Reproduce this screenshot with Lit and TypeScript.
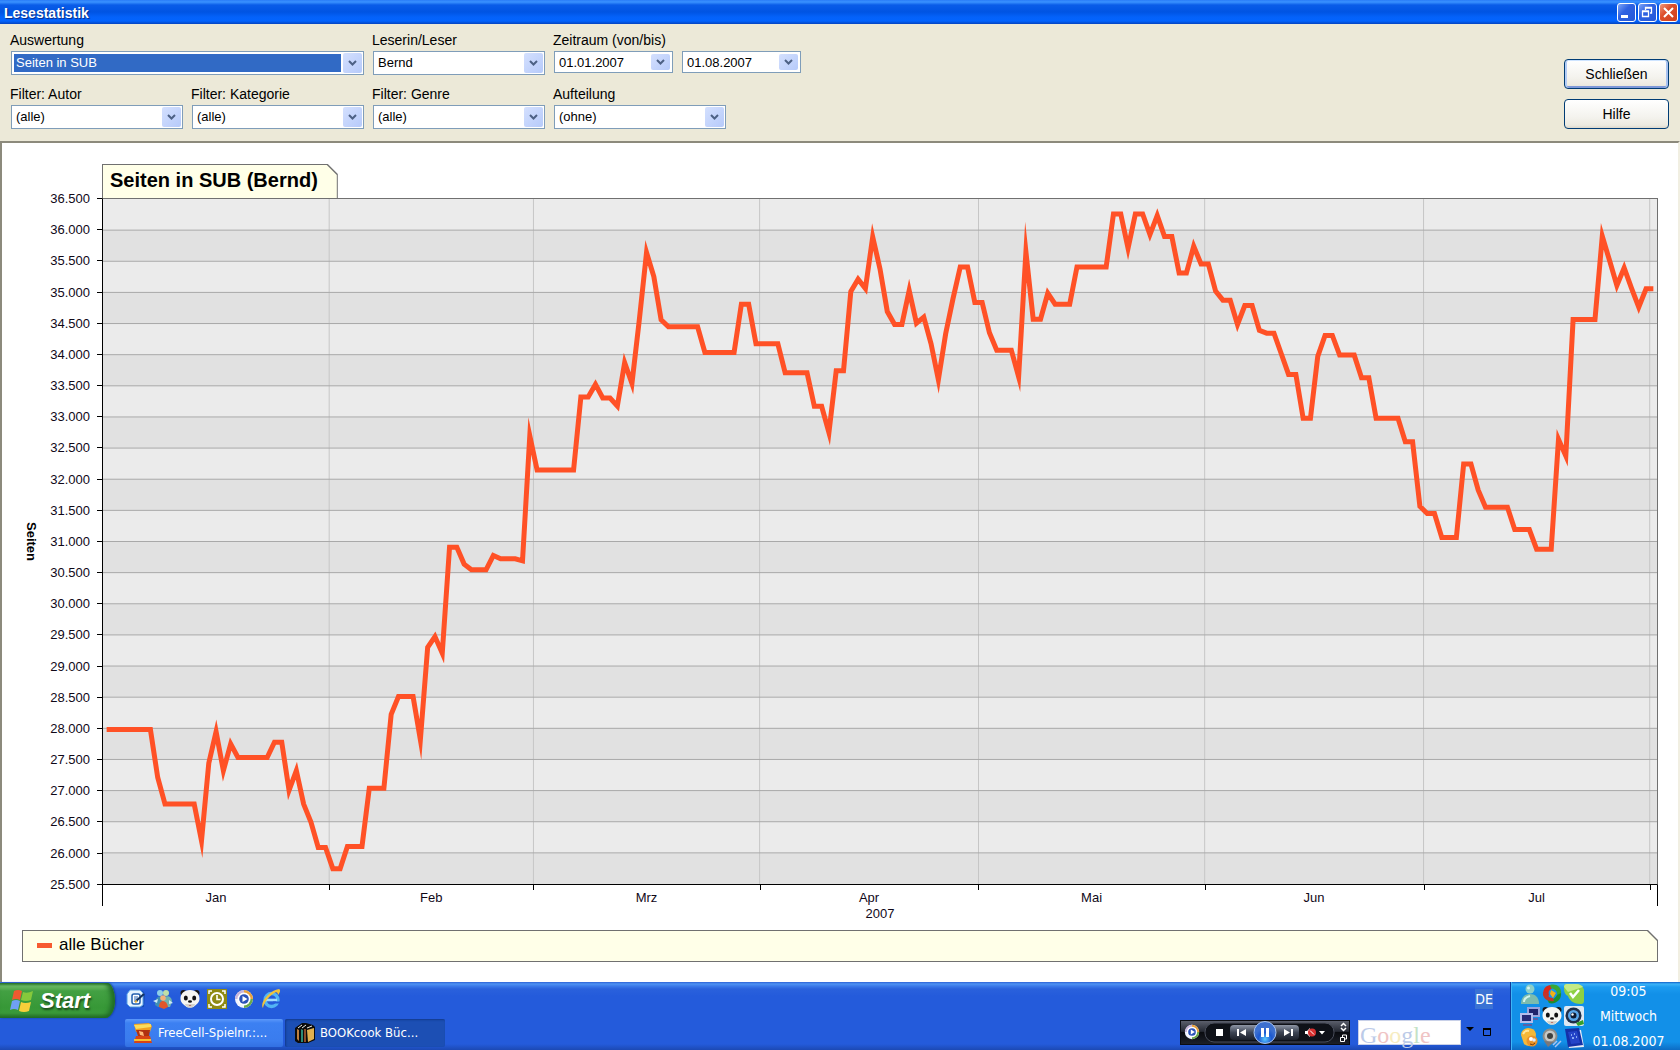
import { LitElement, html, css, svg } from "lit";
import { customElement, state } from "lit/decorators.js";

/* ------------------------------------------------------------------ data */

const DAYS = 213;
const MAX_PAGES = 36500;
const MIN_PAGES = 25500;
const STEP = 500;

const MONTHS = [
  { name: "Jan", days: 31 },
  { name: "Feb", days: 28 },
  { name: "Mrz", days: 31 },
  { name: "Apr", days: 30 },
  { name: "Mai", days: 31 },
  { name: "Jun", days: 30 },
  { name: "Jul", days: 31 },
  { name: "", days: 1 },
];

/** [day of the period, unread pages]; the values between two entries lie on a line. */
const SERIES: [number, number][] = [
  [0, 27980], [6, 27980], [7, 27210], [8, 26783], [12, 26783], [13, 26195], [14, 27440],
  [15, 27945], [16, 27320], [17, 27750], [18, 27531], [22, 27531], [23, 27777], [24, 27777],
  [25, 27004], [26, 27321], [27, 26783], [28, 26494], [29, 26088], [30, 26088], [31, 25746],
  [32, 25746], [33, 26104], [35, 26104], [36, 27039], [38, 27039], [39, 28226], [40, 28509],
  [42, 28509], [43, 27817], [44, 29300], [45, 29473], [46, 29206], [47, 30909], [48, 30909],
  [49, 30637], [50, 30546], [52, 30546], [53, 30775], [54, 30722], [56, 30722], [57, 30690],
  [58, 32696], [59, 32148], [64, 32148], [65, 33320], [66, 33320], [67, 33523], [68, 33304],
  [69, 33304], [70, 33175], [71, 33870], [72, 33539], [73, 34550], [74, 35640], [75, 35255],
  [76, 34560], [77, 34447], [81, 34447], [82, 34036], [86, 34036], [87, 34811], [88, 34811],
  [89, 34175], [92, 34175], [93, 33710], [96, 33710], [97, 33170], [98, 33170], [99, 32748],
  [100, 33742], [101, 33742], [102, 35014], [103, 35212], [104, 35062], [105, 35891],
  [106, 35378], [107, 34693], [108, 34485], [109, 34485], [110, 35030], [111, 34506],
  [112, 34603], [113, 34175], [114, 33598], [115, 34335], [116, 34896], [117, 35410],
  [118, 35410], [119, 34838], [120, 34838], [121, 34351], [122, 34073], [124, 34073],
  [125, 33646], [126, 35650], [127, 34570], [128, 34570], [129, 34987], [130, 34811],
  [132, 34811], [133, 35410], [137, 35410], [138, 36260], [139, 36260], [140, 35709],
  [141, 36260], [142, 36260], [143, 35928], [144, 36233], [145, 35896], [146, 35896],
  [147, 35313], [148, 35313], [149, 35741], [150, 35458], [151, 35458], [152, 35020],
  [153, 34875], [154, 34875], [155, 34485], [156, 34790], [157, 34790], [158, 34389],
  [159, 34346], [160, 34346], [161, 34015], [162, 33683], [163, 33683], [164, 32978],
  [165, 32978], [166, 33972], [167, 34309], [168, 34309], [169, 33993], [171, 33993],
  [172, 33630], [173, 33630], [174, 32978], [177, 32978], [178, 32603], [179, 32603],
  [180, 31566], [181, 31449], [182, 31449], [183, 31064], [185, 31064], [186, 32245],
  [187, 32245], [188, 31823], [189, 31550], [192, 31550], [193, 31192], [195, 31192],
  [196, 30877], [198, 30877], [199, 32641], [200, 32374], [201, 34565], [204, 34565],
  [205, 35901], [206, 35511], [207, 35110], [208, 35394], [209, 35068], [210, 34763],
  [211, 35057], [212, 35057],
];

const germanNumber = (n: number) => `${Math.floor(n / 1000)}.${String(n % 1000).padStart(3, "0")}`;

/* ----------------------------------------------------------------- chart */

@customElement("page-chart")
export class PageChart extends LitElement {
  static styles = css`
    :host {
      display: flex;
      flex-direction: column;
      min-height: 0;
      box-sizing: border-box;
      padding: 21px 20px 20px;
      background: #fff;
      color: #000;
      font: 13px/16px "Liberation Sans", Arial, sans-serif;
    }
    .chart {
      flex: 1;
      min-height: 0;
      display: grid;
      grid-template-columns: 80px minmax(0, 1fr);
      grid-template-rows: auto minmax(0, 1fr) auto auto;
    }
    .head { grid-column: 2; display: flex; }
    .note {
      background: #707070;
      padding: 1px;
      clip-path: polygon(0 0, calc(100% - 10px) 0, 100% 10px, 100% 100%, 0 100%);
    }
    .note-in {
      background: #ffffe8;
      clip-path: polygon(0 0, calc(100% - 10px) 0, 100% 10px, 100% 100%, 0 100%);
    }
    .tab { padding-bottom: 0; }
    .tab .note-in {
      margin: 0;
      padding: 0 19px 3px 7px;
      font-size: 20px;
      line-height: 30px;
      font-weight: bold;
    }
    .yaxis { grid-column: 1; display: flex; min-height: 0; }
    .ytitle {
      writing-mode: vertical-rl;
      align-self: center;
      width: 17px;
      font-weight: bold;
    }
    .ylabels {
      flex: 1;
      display: flex;
      flex-direction: column;
      justify-content: space-between;
      margin: -8px 0;
    }
    .ylabel {
      display: flex;
      justify-content: flex-end;
      align-items: center;
      gap: 7px;
      height: 17px;
      line-height: 17px;
      color: #100818;
    }
    .ylabel::after { content: ""; width: 5px; height: 1px; background: #000; }
    .plot {
      grid-column: 2;
      min-height: 0;
      border: 1px solid #707070;
      border-left-color: #000;
      border-bottom-color: #000;
    }
    .plot svg { display: block; width: 100%; height: 100%; overflow: visible; }
    .light { fill: #ebebeb; }
    .dark { fill: #e1e1e1; }
    .hline, .vline { vector-effect: non-scaling-stroke; stroke-width: 1px; shape-rendering: crispEdges; }
    .hline { stroke: #a9a9a9; }
    .vline { stroke: #c6c6c6; }
    .series {
      fill: none;
      stroke: #ff5126;
      stroke-width: 5px;
      stroke-linejoin: miter;
      stroke-miterlimit: 20;
      vector-effect: non-scaling-stroke;
    }
    .xaxis {
      grid-column: 2;
      display: grid;
      border: solid #000;
      border-width: 0 1px;
      color: #100818;
    }
    .month { min-width: 0; text-align: center; line-height: 16px; }
    .month::before { content: ""; display: block; width: 1px; height: 5px; background: #000; }
    .month:first-child::before { background: none; }
    .year { grid-column: 2; text-align: center; color: #100818; }
    .legend { margin-top: 8px; }
    .legend .note-in {
      display: flex;
      align-items: center;
      gap: 7px;
      padding: 3px 14px 5px;
      font-size: 17px;
      line-height: 22px;
    }
    .swatch { width: 15px; height: 5px; background: #f75a30; }
  `;

  private renderPlot() {
    const rows = (MAX_PAGES - MIN_PAGES) / STEP;
    const bounds: number[] = [];
    MONTHS.reduce((sum, m) => {
      bounds.push(sum + m.days);
      return sum + m.days;
    }, 0);
    const points = SERIES.map(([day, v]) => `${day + 0.5},${((MAX_PAGES - v) / STEP).toFixed(3)}`).join(" ");
    return html`<svg viewBox="0 0 ${DAYS} ${rows}" preserveAspectRatio="none" role="img" aria-label="Seiten in SUB">
      ${Array.from({ length: rows }, (_, i) => svg`<rect class=${i % 2 ? "dark" : "light"} x="0" y=${i} width=${DAYS} height="1" shape-rendering="crispEdges"></rect>`)}
      ${bounds.slice(0, -1).map((x) => svg`<line class="vline" x1=${x} x2=${x} y1="0" y2=${rows}></line>`)}
      ${Array.from({ length: rows - 1 }, (_, i) => svg`<line class="hline" x1="0" x2=${DAYS} y1=${i + 1} y2=${i + 1}></line>`)}
      <polyline class="series" points=${points}></polyline>
    </svg>`;
  }

  render() {
    const ticks: number[] = [];
    for (let v = MAX_PAGES; v >= MIN_PAGES; v -= STEP) ticks.push(v);
    return html`
      <div class="chart">
        <div class="head"><div class="note tab"><h1 class="note-in">Seiten in SUB (Bernd)</h1></div></div>
        <div class="yaxis">
          <div class="ytitle">Seiten</div>
          <div class="ylabels">${ticks.map((t) => html`<div class="ylabel">${germanNumber(t)}</div>`)}</div>
        </div>
        <div class="plot">${this.renderPlot()}</div>
        <div class="xaxis" style="grid-template-columns:${MONTHS.map((m) => `${m.days}fr`).join(" ")}">
          ${MONTHS.map((m) => html`<div class="month">${m.name}</div>`)}
        </div>
        <div class="year">2007</div>
      </div>
      <div class="note legend"><div class="note-in"><span class="swatch"></span>alle Bücher</div></div>
    `;
  }
}

/* --------------------------------------------------------------- taskbar */

const panda = svg`<circle cx="3.500" cy="4" r="3" fill="#181818"/><circle cx="16.500" cy="4" r="3" fill="#181818"/>
  <path d="M10 1c6 0 9.500 4 9.500 8.500 0 4-3 6-5 7.500-1 2-8 2-9 0-2-1.500-5-3.500-5-7.500C.5 5 4 1 10 1z" fill="#f6f6f2"/><path d="M5 15c1 5 9 5 10 0z" fill="#d4d4cc"/>
  <ellipse cx="5.800" cy="9" rx="2" ry="2.500" fill="#111"/><ellipse cx="14.200" cy="9" rx="2" ry="2.500" fill="#111"/>
  <ellipse cx="10" cy="12.500" rx="2" ry="1.300" fill="#111"/><path d="M8.500 16q1.500 1.500 3 0z" fill="#b03030"/>`;

const icons = {
  desktop: svg`<path d="M3 2h14l2 3-1 13-14 1-2-4z" fill="#0d3f9c" opacity=".6"/><path d="M4 1h10l3 3v12l-3 2H4l-3-3V5z" fill="#e6f4ff" stroke="#58a0e8"/>
    <rect x="6" y="5" width="8" height="10" rx="2" fill="#fff" stroke="#225fae" stroke-width="1.500"/><path d="M8 8h4M8 10h5M8 12h4" stroke="#2a68b8"/><path d="M10 12l8-7" stroke="#14325f" stroke-width="2"/><path d="M9 13l2-1" stroke="#e6b23a" stroke-width="2"/>`,
  messenger: svg`<circle cx="7" cy="4" r="3" fill="#8fd0e8"/><circle cx="13" cy="4" r="3" fill="#bfe0a8"/><path d="M2 16c0-11 9-11 9-3v5H5z" fill="#3f8fb5"/>
    <path d="M9 15c0-10 10-10 10-2l-2 5H9z" fill="#6fb4b0"/><circle cx="10" cy="9" r="2.800" fill="#f2b27a"/><path d="M6 18c0-8 8-8 9 0l-4 2z" fill="#e0562c"/><path d="M0 12l5-2-1 4zM20 14l-4-3v4z" fill="#cfe8f4"/>`,
  panda,
  clock: svg`<rect x="0" y="0" width="20" height="20" fill="#8f8a12"/><path d="M2 5V2h3M15 2h3v3M18 15v3h-3M5 18H2v-3" fill="none" stroke="#fff" stroke-width="1.500"/>
    <circle cx="10" cy="10" r="6" fill="none" stroke="#fff" stroke-width="2"/><path d="M10 6v4.500h3.500" fill="none" stroke="#fff" stroke-width="1.600"/>`,
  media: svg`<circle cx="10" cy="10" r="9" fill="#f0f4fe"/><path d="M10 1a9 9 0 0 1 9 9h-3a6 6 0 0 0-6-6z" fill="#e9a13c"/>
    <path d="M19 10a9 9 0 0 1-9 9v-3a6 6 0 0 0 6-6z" fill="#6aa84a"/><path d="M1 10a9 9 0 0 1 9-9v3a6 6 0 0 0-6 6z" fill="#c9b6da"/>
    <circle cx="10" cy="10" r="6.500" fill="#fff"/><circle cx="10" cy="10" r="4.800" fill="#2b52b8"/><path d="M8.500 7l5 3-5 3z" fill="#fff"/>`,
  explorer: svg`<circle cx="10.500" cy="11" r="6.500" fill="none" stroke="#52b4f4" stroke-width="3.400"/><path d="M5 11h11" stroke="#9fdcff" stroke-width="2.600"/><path d="M12 14.500h8v-2h-8z" fill="#245bdb"/>
    <path d="M2 19C-2 14 9 1 18 0c2 1 1 4-1 6 0-3-2-4-5-1C7 8 3 14 2 19z" fill="#f0c23c"/>`,
  person: svg`<circle cx="10" cy="5" r="4.500" fill="#8ccfc8"/><path d="M1 20c0-7 4-10 9-10s9 3 9 10z" fill="#7cbcae"/><path d="M4 18c0-3 2-5 6-6" stroke="#d4f4ec" stroke-width="2" fill="none"/><circle cx="8.500" cy="4" r="1.500" fill="#d8f4f0"/>`,
  swirl: svg`<path d="M4 15A8 8 0 0 1 8 1l5 1-4 3a5 5 0 0 0-2 6z" fill="#d82a1c"/><path d="M8 1c7-2 12 3 11 9l-4 2c1-4-1-7-6-8z" fill="#38a838"/><path d="M19 9c1 7-6 12-12 10l-2-4c4 2 8 0 10-4z" fill="#1f8f2b"/>
    <path d="M1 8c-1 7 6 10 11 9l-1-3c-3 0-5-1-6-5z" fill="#c3352b"/><path d="M9 6l5 3-3 5-3-4z" fill="#f0b018"/>`,
  check: svg`<path d="M0 3q0-3 3-3h9c6 0 9 5 8 9v8q0 3-3 3C8 20 5 15 4 12 0 10 0 6 0 3z" fill="#8ed044"/><path d="M0 3q0-3 3-3h9c4 0 6 2 7 3L4 8z" fill="#c4ea86"/><path d="M6 9l3 4 6-7" fill="none" stroke="#fff" stroke-width="2.500"/>`,
  network: svg`<rect x="7" y="1" width="13" height="10" fill="#9aa4dc"/><rect x="9" y="3" width="9" height="6" fill="#20246c"/><rect x="0" y="7" width="13" height="10" fill="#b4bcec"/><rect x="2" y="9" width="9" height="6" fill="#262a78"/><path d="M3 19h9M13 13h5" stroke="#5a60a8" stroke-width="2"/>`,
  webcam: svg`<rect x="0" y="0" width="20" height="20" rx="2" fill="#dfe8f2"/><circle cx="9.500" cy="9.500" r="8" fill="#1f2e48"/><circle cx="9.500" cy="9.500" r="5.500" fill="#5aa6e8"/><circle cx="9.500" cy="9.500" r="3" fill="#0e1a30"/><circle cx="8.500" cy="8.500" r="1.200" fill="#fff"/><path d="M12 17l7-3 1 4-6 2z" fill="#35a02c"/>`,
  smiley: svg`<path d="M1 7q0-6 7-7 7 0 8 6l-1 10q-6 4-11 0z" fill="#f4b838"/><path d="M3 6q2-4 6-3" stroke="#ffe69a" stroke-width="2" fill="none"/><circle cx="12" cy="13" r="5.500" fill="#e8932a"/><circle cx="11" cy="11" r="2" fill="#fff"/><circle cx="14" cy="12" r="1.800" fill="#dfe8f8"/><path d="M10 16q3 2 5-1" stroke="#7a3d08" fill="none"/>`,
  speaker: svg`<circle cx="8" cy="8" r="7.500" fill="#8c8c88"/><circle cx="8" cy="8" r="5.500" fill="#c8c8c4"/><circle cx="8" cy="8" r="3" fill="#40403e"/><path d="M2 13l4 6 6-5z" fill="#77777a"/><path d="M13 19l6-6M11 17l4-4" stroke="#a8c4f0" stroke-width="1.500"/>`,
  book: svg`<path d="M3 1l14 1 3 17-15 1z" fill="#e8ecf8"/><path d="M1 1l14-1 4 17-15 2z" fill="#1430a8"/><path d="M4 4l9-1 3 12-9 1z" fill="#2444c8"/><path d="M7 7h1M10 6h1M8 10h2M12 9h1" stroke="#a8c8ff" stroke-width="1.500"/>`,
  freecell: svg`<path d="M1 1l15-1 3 3-2 6H3z" fill="#f0a020"/><path d="M1 2l17-1v3L3 6z" fill="#fadc5c"/><path d="M3 7h14l-1 6H5z" fill="#b03010"/><path d="M6 8l4 1 1 4-4-1z" fill="#ffb878"/><path d="M3 13h14l2 7H1z" fill="#d84414"/><path d="M1 17h17" stroke="#f8c030" stroke-width="2"/>`,
  books: svg`<path d="M0 5l7-5h4l7 2 2 2v13l-7 3H3l-3-2z" fill="#0c0c0c"/><path d="M2 6l2 1v11l-2-2z" fill="#c08040"/><path d="M6 6l2 1v12H6z" fill="#2a8a78"/><path d="M9 6h2v13H9z" fill="#8a4c28"/><path d="M12 7l7-2v11l-6 3z" fill="#e0b050"/><path d="M3 5l4-3M7 5l4-3M12 5l5-2" stroke="#f0f0e8"/>`,
};

@customElement("task-bar")
export class TaskBar extends LitElement {
  static styles = css`
    :host {
      display: flex;
      height: 68px;
      flex: none;
      color: #fff;
      font: 14px/18px "DejaVu Sans Condensed", "DejaVu Sans", Tahoma, sans-serif;
      background: linear-gradient(#2c62d6 0, #4e92f2 2px, #3c7bea 4px, #2a61dc 7px, #245bdb 14px, #245bdb 62px, #1c49b4 68px);
    }
    button { font: inherit; color: inherit; border: 0; padding: 0; cursor: pointer; }
    .start {
      align-self: flex-start;
      display: flex;
      align-items: center;
      gap: 7px;
      width: 115px;
      height: 35px;
      margin-top: 1px;
      padding-left: 9px;
      box-sizing: border-box;
      border-radius: 0 8px 10px 0 / 0 18px 18px 0;
      background: linear-gradient(#2e7a2e, #6dbd67 3px, #43a043 8px, #379837 24px, #3a9a3a 30px, #246c24);
      box-shadow: inset -4px 0 5px #1f6b25, 1px 0 2px #143c9a;
      font: italic bold 22px/30px "Liberation Sans", Arial, sans-serif;
      text-shadow: 1px 2px 2px #1c4a1c;
    }
    .middle {
      flex: 1;
      min-width: 0;
      display: flex;
      flex-direction: column;
      gap: 6px;
      padding: 5px 17px 3px 10px;
    }
    .row { display: flex; align-items: center; justify-content: space-between; }
    .quick { display: flex; gap: 7px; height: 24px; align-items: center; padding-left: 1px; }
    .quick button, .tray button { background: none; display: block; }
    .icon { display: block; width: 20px; height: 20px; }
    .lang { background: #3a72d4; line-height: 20px; }
    .tasks { display: flex; gap: 2px; margin-top: 2px; }
    .task {
      display: flex;
      align-items: center;
      gap: 5px;
      width: 158px;
      height: 28px;
      padding: 0 8px;
      border-radius: 2px;
      background: linear-gradient(#5c98fa, #3c80f2 4px, #3a7cee 22px, #3270e2);
      font-size: 13px;
      white-space: nowrap;
    }
    .active {
      width: 160px;
      padding: 0 10px;
      background: #1c4fb4;
      box-shadow: inset 1px 1px 2px #123a8c;
    }
    .tools { display: flex; align-items: center; gap: 4px; }
    .player { display: block; width: 170px; height: 25px; margin-right: 4px; }
    .search {
      display: block;
      width: 103px;
      height: 25px;
      box-sizing: border-box;
      border: 1px solid #c8d0e8;
      padding: 0 2px;
      background: #fff;
      color: #000;
    }
    .searchbox { display: grid; height: 25px; align-items: start; }
    .searchbox > * { grid-area: 1 / 1; }
    .brand {
      pointer-events: none;
      padding-left: 2px;
      font: 24px/30px "Liberation Serif", serif;
    }
    .b { color: #bccbe8; }
    .r { color: #efc4c4; }
    .y { color: #f6ecc0; }
    .g { color: #c4e2c6; }
    .toggles { width: 28px; height: 18px; display: block; }
    .tray {
      display: flex;
      align-items: center;
      gap: 8px;
      width: 170px;
      box-sizing: border-box;
      padding: 0 8px 0 9px;
      border-left: 1px solid #0e3c9e;
      background: linear-gradient(#0f5fc8 0, #3cb4f8 2px, #1c9cf0 5px, #1290e8 12px, #1290e8 60px, #0d6cc4);
      box-shadow: inset 1px 0 0 #3fb6f6;
    }
    .tray-icons { display: grid; grid-template-columns: repeat(3, 20px); gap: 2px; }
    .clock {
      flex: 1;
      display: flex;
      flex-direction: column;
      text-align: center;
      line-height: 25px;
      padding-right: 7px;
    }
  `;

  private icon(shape: unknown) {
    return html`<svg class="icon" viewBox="0 0 20 20" aria-hidden="true">${shape}</svg>`;
  }

  render() {
    const quick: [string, unknown][] = [
      ["Desktop anzeigen", icons.desktop],
      ["Messenger", icons.messenger],
      ["Panda", icons.panda],
      ["Uhr", icons.clock],
      ["Media Player", icons.media],
      ["Internet Explorer", icons.explorer],
    ];
    const tray: [string, unknown][] = [
      ["Benutzer", icons.person],
      ["Synchronisierung", icons.swirl],
      ["Status", icons.check],
      ["Netzwerk", icons.network],
      ["Panda", icons.panda],
      ["Kamera", icons.webcam],
      ["Nachrichten", icons.smiley],
      ["Lautsprecher", icons.speaker],
      ["Kalender", icons.book],
    ];
    return html`
      <button class="start">
        <svg width="24" height="24" viewBox="0 0 24 24" aria-hidden="true">
          <path d="M5 2q4-2 8 0l-2 9q-4-2-8 0z" fill="#ee5a30"/>
          <path d="M14 3q4 2 10-1l-2 9q-5 2-10 0z" fill="#86c83c"/>
          <path d="M3 12q4-2 8 0l-2 9q-4-2-8 0z" fill="#6fa0f4"/>
          <path d="M12 13q4 2 10 0l-2 9q-5 2-10 0z" fill="#f8cf3a"/>
        </svg>Start
      </button>
      <div class="middle">
        <div class="row">
          <div class="quick">${quick.map(([name, s]) => html`<button aria-label=${name}>${this.icon(s)}</button>`)}</div>
          <span class="lang">DE</span>
        </div>
        <div class="row">
          <div class="tasks">
            <button class="task">${this.icon(icons.freecell)}FreeCell-Spielnr.:...</button>
            <button class="task active">${this.icon(icons.books)}BOOKcook Büc...</button>
          </div>
          <div class="tools">
            <svg class="player" viewBox="0 0 170 25" role="img" aria-label="Media Player">
              <defs>
                <linearGradient id="bar" x2="0" y2="1"><stop offset="0" stop-color="#5b5f6c"/><stop offset=".45" stop-color="#262a34"/><stop offset=".5" stop-color="#090b10"/><stop offset="1" stop-color="#1c2029"/></linearGradient>
                <linearGradient id="key" x2="0" y2="1"><stop offset="0" stop-color="#8e96a6"/><stop offset=".5" stop-color="#3c4454"/><stop offset="1" stop-color="#1a1f2a"/></linearGradient>
                <radialGradient id="ball" cy=".8"><stop offset="0" stop-color="#58c8ff"/><stop offset=".6" stop-color="#1c58d0"/><stop offset="1" stop-color="#3c70d0"/></radialGradient>
              </defs>
              <rect width="170" height="25" fill="#0a0c12"/>
              <rect x="1" y="1" width="168" height="23" fill="url(#bar)"/>
              <g transform="translate(4 4) scale(.8)">${icons.media}</g>
              <rect x="25" y="3" width="129" height="19" rx="9" fill="#0e1118" stroke="#4a4f5c"/>
              <rect x="36" y="9" width="7" height="7" fill="#fff"/>
              <rect x="50" y="5" width="69" height="15" rx="4" fill="url(#key)"/>
              <path d="M57 9h2v7h-2zM66 9v7l-6-3.500zM104 9l6 3.500-6 3.500zM111 9h2v7h-2z" fill="#fff"/>
              <circle cx="85" cy="12.500" r="11" fill="url(#ball)" stroke="#a8c4f0"/>
              <path d="M81 8h3v9h-3zM86 8h3v9h-3z" fill="#fff"/>
              <path d="M125 11h2l3-3v9l-3-3h-2z" fill="#fff"/>
              <circle cx="132" cy="12.500" r="4" fill="#d83030"/><path d="M130 10.500l4 4" stroke="#fff"/>
              <path d="M139 11h6l-3 3.500z" fill="#fff"/>
              <path d="M161 6l2.500-2.500L166 6M161 8l2.500 2.500L166 8" fill="none" stroke="#fff" stroke-width="1.500"/>
              <path d="M160.500 17.500h4v4h-4zM162.500 17v-2h4v4h-2" fill="none" stroke="#fff"/>
            </svg>
            <div class="searchbox">
              <input class="search" type="text" aria-label="Google">
              <span class="brand"><span class="b">G</span><span class="r">o</span><span class="y">o</span><span class="b">g</span><span class="g">l</span><span class="r">e</span></span>
            </div>
            <svg class="toggles" viewBox="0 0 28 18" aria-hidden="true">
              <path d="M1 4h8L5 8z" fill="#000"/><path d="M18.500 6.500h7v6h-7z" fill="none" stroke="#000"/><path d="M18 6h8" stroke="#000" stroke-width="2"/>
            </svg>
          </div>
        </div>
      </div>
      <div class="tray">
        <div class="tray-icons">${tray.map(([name, s]) => html`<button aria-label=${name}>${this.icon(s)}</button>`)}</div>
        <div class="clock"><span>09:05</span><span>Mittwoch</span><span>01.08.2007</span></div>
      </div>
    `;
  }
}

/* ---------------------------------------------------------------- window */

@customElement("app-root")
export class AppRoot extends LitElement {
  static styles = css`
    :host {
      display: flex;
      flex-direction: column;
      height: 100vh;
      background: #ece9d8;
      color: #000;
      font: 14px/18px "Liberation Sans", Arial, sans-serif;
    }
    .titlebar {
      flex: none;
      display: flex;
      align-items: center;
      justify-content: space-between;
      height: 24px;
      padding: 0 2px 0 4px;
      background: linear-gradient(#2a7cf8 0, #3a92ff 2px, #0a5ce8 5px, #0054e3 12px, #0462fa 17px, #0264fe 21px, #0444c0 24px);
    }
    .title {
      color: #fff;
      font: bold 14px/22px "Liberation Sans", Arial, sans-serif;
      padding-top: 2px;
      text-shadow: 1px 1px 1px #0a2a80;
    }
    .winbuttons { display: flex; gap: 2px; }
    .win {
      display: block;
      width: 19px;
      height: 19px;
      padding: 0;
      border: 1px solid #fff;
      border-radius: 3px;
      background: linear-gradient(135deg, #7ea6f8, #2f62e2 40%, #2458d8);
    }
    .close { background: linear-gradient(135deg, #f0997c, #dd4f2c 40%, #cf3f1c); }
    .win svg { display: block; width: 17px; height: 17px; }
    .toolbar {
      flex: none;
      display: flex;
      justify-content: space-between;
      padding: 7px 11px 12px;
    }
    .fields { display: grid; grid-template-columns: repeat(5, 172px); gap: 9px; }
    .field { display: flex; flex-direction: column; gap: 2px; }
    .wide { grid-column: span 2; }
    .field label { margin-left: -1px; }
    .dates { display: flex; gap: 9px; }
    .combo {
      display: grid;
      box-sizing: border-box;
      height: 24px;
      border: 1px solid #7f9db9;
      background: #fff;
    }
    .combo > * { grid-area: 1 / 1; }
    .date { width: 119px; height: 22px; }
    .control {
      appearance: none;
      width: 100%;
      height: 100%;
      min-width: 0;
      margin: 0;
      box-sizing: border-box;
      border: 2px solid transparent;
      border-right-width: 22px;
      border-radius: 0;
      padding: 0 2px;
      outline: none;
      background: none;
      background-clip: padding-box;
      color: #000;
      font: 13px/16px "Liberation Sans", Arial, sans-serif;
    }
    .selected { background-color: #316ac5; color: #fff; }
    .arrow {
      pointer-events: none;
      justify-self: end;
      width: 19px;
      margin: 1px;
      padding: 0;
      border: 0;
      border-radius: 2px;
      display: grid;
      place-items: center;
      background: linear-gradient(135deg, #d4e0fe, #b6cafa);
    }
    .date .arrow { height: 16px; margin: 2px; pointer-events: auto; }
    .arrow svg { display: block; width: 9px; height: 6px; }
    .actions { display: flex; flex-direction: column; gap: 10px; padding-top: 28px; }
    .action {
      width: 105px;
      height: 30px;
      border: 1px solid #003c74;
      border-radius: 4px;
      padding: 0;
      background: linear-gradient(#fff, #f4f3ee 60%, #eceae0 90%, #dcd8cc);
      color: #000;
      font: inherit;
    }
    .default { box-shadow: inset 0 1px #cee4ff, inset 2px 0 #b4cdf6, inset -2px 0 #a8c2f0, inset 0 -2px #7d98d8; }
    page-chart {
      flex: 1;
      border: solid #8c8a7c;
      border-width: 2px 2px 0;
      border-right-color: #f1efe2;
      box-shadow: inset 1px 1px #fff;
    }
  `;

  @state() private from = "01.01.2007";
  @state() private to = "01.08.2007";

  private get chevron() {
    return html`<svg viewBox="0 0 9 6" aria-hidden="true"><path d="M1 1l3.500 3.500L8 1" fill="none" stroke="#4d6185" stroke-width="2"/></svg>`;
  }

  private select(id: string, label: string, value: string, mark = false) {
    return html`<div class="field ${mark ? "wide" : ""}">
      <label for=${id}>${label}</label>
      <div class="combo">
        <select id=${id} class="control ${mark ? "selected" : ""}"><option>${value}</option></select>
        <span class="arrow">${this.chevron}</span>
      </div>
    </div>`;
  }

  private date(id: string, label: string, value: string) {
    return html`<div class="combo date">
      <input id=${id} class="control" type="text" aria-label=${label} .value=${value}>
      <button class="arrow" aria-label="Kalender öffnen">${this.chevron}</button>
    </div>`;
  }

  render() {
    return html`
      <header class="titlebar">
        <span class="title">Lesestatistik</span>
        <div class="winbuttons">
          <button class="win" aria-label="Minimieren"><svg viewBox="0 0 17 17"><path d="M3 11h7v3H3z" fill="#fff"/></svg></button>
          <button class="win" aria-label="Wiederherstellen"><svg viewBox="0 0 17 17"><path d="M3.500 7.500h6v5h-6zM3 7h7M6.500 6V3.500h6v5.500H11M6 4h7" fill="none" stroke="#fff" stroke-width="1.300"/></svg></button>
          <button class="win close" aria-label="Fenster schließen"><svg viewBox="0 0 17 17"><path d="M4 4l9 9M13 4l-9 9" stroke="#fff" stroke-width="2"/></svg></button>
        </div>
      </header>
      <section class="toolbar">
        <div class="fields">
          ${this.select("auswertung", "Auswertung", "Seiten in SUB", true)}
          ${this.select("leser", "Leserin/Leser", "Bernd")}
          <div class="field wide">
            <label for="von">Zeitraum (von/bis)</label>
            <div class="dates">${this.date("von", "Zeitraum von", this.from)}${this.date("bis", "Zeitraum bis", this.to)}</div>
          </div>
          ${this.select("autor", "Filter: Autor", "(alle)")}
          ${this.select("kategorie", "Filter: Kategorie", "(alle)")}
          ${this.select("genre", "Filter: Genre", "(alle)")}
          ${this.select("aufteilung", "Aufteilung", "(ohne)")}
        </div>
        <div class="actions">
          <button class="action default">Schließen</button>
          <button class="action">Hilfe</button>
        </div>
      </section>
      <page-chart></page-chart>
      <task-bar></task-bar>
    `;
  }
}
